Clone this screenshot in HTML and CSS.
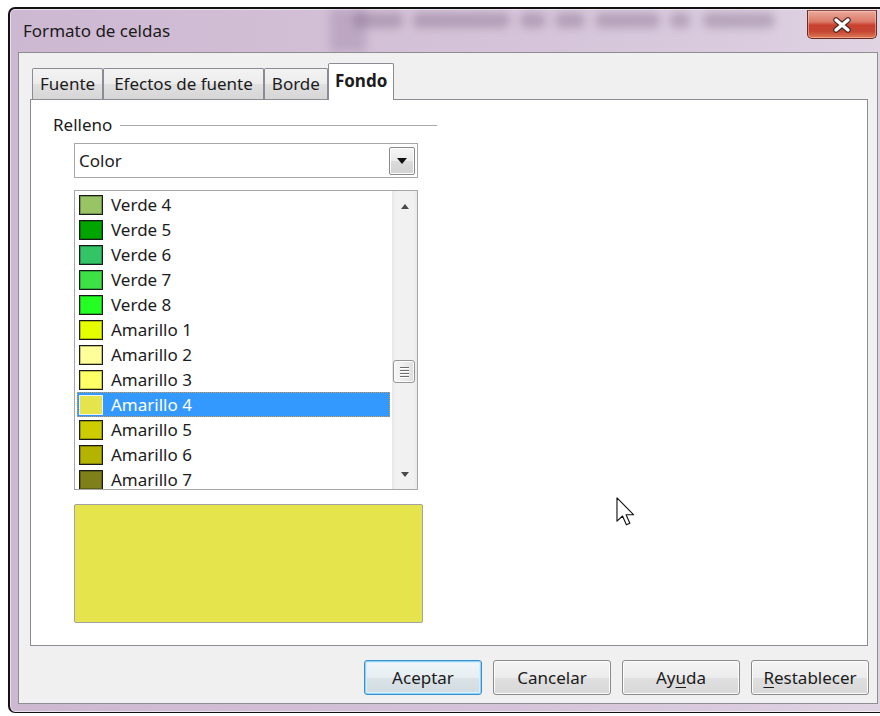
FILE: index.html
```html
<!DOCTYPE html>
<html lang="es">
<head>
<meta charset="utf-8">
<title>Formato de celdas</title>
<link rel="stylesheet" href="styles.css">
</head>
<body>
<div class="window">
  <div class="titlebar">
    <div class="glass" aria-hidden="true">
      <span class="glass-band"></span>
      <span class="glass-blob" style="left:335px;width:50px"></span>
      <span class="glass-blob" style="left:395px;width:97px"></span>
      <span class="glass-blob" style="left:502px;width:26px"></span>
      <span class="glass-blob" style="left:537px;width:30px"></span>
      <span class="glass-blob" style="left:577px;width:65px"></span>
      <span class="glass-blob" style="left:652px;width:20px"></span>
      <span class="glass-blob" style="left:685px;width:72px"></span>
    </div>
    <span class="title">Formato de celdas</span>
    <button class="close" type="button" aria-label="Cerrar">
      <svg width="20" height="16" viewBox="0 0 20 16">
        <path d="M4 3 L16 13 M16 3 L4 13" stroke="#4a2a28" stroke-width="5.6" stroke-linecap="round" fill="none"/>
        <path d="M4 3 L16 13 M16 3 L4 13" stroke="#ffffff" stroke-width="3.4" stroke-linecap="round" fill="none"/>
      </svg>
    </button>
  </div>

  <div class="client">
    <div class="tabs">
      <div class="tab">Fuente</div>
      <div class="tab wide">Efectos de fuente</div>
      <div class="tab">Borde</div>
      <div class="tab active">Fondo</div>
    </div>

    <div class="panel">
      <div class="group">
        <div class="group-head"><span>Relleno</span><span class="rule"></span></div>
        <div class="group-body">
          <div class="combo">
            <span>Color</span>
            <span class="combo-btn">
              <svg width="10" height="6" viewBox="0 0 10 6"><path d="M0 0 H10 L5 6 Z" fill="#111"/></svg>
            </span>
          </div>

          <div class="listbox">
            <div class="rows">
              <div class="row"><span class="swatch" style="background:#99c466"></span>Verde 4</div>
              <div class="row"><span class="swatch" style="background:#00a500"></span>Verde 5</div>
              <div class="row"><span class="swatch" style="background:#33c466"></span>Verde 6</div>
              <div class="row"><span class="swatch" style="background:#3de045"></span>Verde 7</div>
              <div class="row"><span class="swatch" style="background:#23ff23"></span>Verde 8</div>
              <div class="row"><span class="swatch" style="background:#e6ff00"></span>Amarillo 1</div>
              <div class="row"><span class="swatch" style="background:#ffff99"></span>Amarillo 2</div>
              <div class="row"><span class="swatch" style="background:#ffff66"></span>Amarillo 3</div>
              <div class="row selected"><span class="swatch" style="background:#e6e44c"></span>Amarillo 4</div>
              <div class="row"><span class="swatch" style="background:#cccc00"></span>Amarillo 5</div>
              <div class="row"><span class="swatch" style="background:#b3b300"></span>Amarillo 6</div>
              <div class="row"><span class="swatch" style="background:#808019"></span>Amarillo 7</div>
            </div>
            <div class="scrollbar">
              <span class="sb-arrow"><svg width="8" height="5" viewBox="0 0 8 5"><path d="M0 5 L4 0 L8 5 Z" fill="#4a4a4a"/></svg></span>
              <span class="sb-track">
                <span class="sb-thumb" style="margin-top:139px">
                  <i></i><i></i><i></i><i></i>
                </span>
              </span>
              <span class="sb-arrow"><svg width="8" height="5" viewBox="0 0 8 5"><path d="M0 0 L8 0 L4 5 Z" fill="#4a4a4a"/></svg></span>
            </div>
          </div>

          <div class="preview" style="background:#e6e44c"></div>
        </div>
      </div>

      <svg class="cursor" width="19" height="29" viewBox="0 0 12.6 19.4">
        <path d="M0.6 0.6 V16.2 L4.3 12.7 L6.9 18.6 L9.2 17.6 L6.7 11.9 L11.8 11.9 Z" fill="#fff" stroke="#111" stroke-width="0.75" stroke-linejoin="round"/>
      </svg>
    </div>

    <div class="buttons">
      <button class="btn default" type="button">Aceptar</button>
      <button class="btn" type="button">Cancelar</button>
      <button class="btn" type="button">Ay<u>u</u>da</button>
      <button class="btn" type="button"><u>R</u>establecer</button>
    </div>
  </div>
</div>
</body>
</html>
```

FILE: styles.css
```css
* {
  box-sizing: border-box;
}

html,
body {
  margin: 0;
  height: 100%;
}

body {
  background: #ffffff;
  overflow: hidden;
  font-family: "Noto Sans", "Open Sans", sans-serif;
  font-size: 17px;
  color: #1c1c1c;
}

/* ---------- window frame ---------- */

.window {
  margin: 7px 0 0 8px;
  width: 880px;
  height: 706px;
  padding: 0 8px 8px 8px;
  border: 2px solid #121212;
  border-bottom-width: 1px;
  border-radius: 7px 7px 0 7px;
  background: linear-gradient(90deg, #cdb8d1 0%, #d3c1d7 45%, #d9cadd 80%, #e0d4e3 100%);
  box-shadow: inset 0 0 0 1px rgba(255, 255, 255, 0.55);
}

.titlebar {
  position: relative;
  height: 43px;
  display: flex;
  align-items: flex-start;
}

.glass {
  position: absolute;
  inset: 0;
  overflow: hidden;
  pointer-events: none;
}

.glass-band {
  position: absolute;
  left: 312px;
  top: 0;
  width: 36px;
  height: 43px;
  background: rgba(140, 108, 148, 0.3);
  filter: blur(5px);
}

.glass-blob {
  position: absolute;
  top: 4px;
  height: 15px;
  border-radius: 7px;
  background: rgba(110, 84, 118, 0.32);
  filter: blur(4px);
}

.title {
  position: relative;
  padding: 12px 0 0 5px;
  line-height: 20px;
  color: #1b1b1b;
}

.close {
  position: relative;
  margin: 1px 1px 0 auto;
  width: 70px;
  height: 29px;
  padding: 0;
  border: 1px solid #6b2a22;
  border-top-color: #8a4a42;
  border-radius: 0 0 5px 5px;
  background: linear-gradient(#eaa899 0%, #dc7a68 40%, #c8412f 52%, #c54532 75%, #de7a55 100%);
  box-shadow: inset 0 0 0 1px rgba(255, 220, 210, 0.45);
  display: flex;
  align-items: center;
  justify-content: center;
}

/* ---------- client area ---------- */

.client {
  height: 652px;
  border: 1px solid #8f8c94;
  background: #f0f0f0;
  padding: 10px 8px 0 11px;
}

.tabs {
  position: relative;
  z-index: 1;
  display: flex;
  align-items: flex-end;
  height: 37px;
  margin: 0 0 -1px 2px;
}

.tab {
  height: 31px;
  margin-bottom: 1px;
  padding: 0 7px;
  border: 1px solid #898c95;
  border-bottom: none;
  border-radius: 2px 2px 0 0;
  background: linear-gradient(#f3f3f3 0%, #ececec 50%, #e0e0e0 51%, #d6d6d6 100%);
  line-height: 29px;
  white-space: nowrap;
}

.tab.wide {
  padding: 0 10px;
}

.tab.active {
  height: 37px;
  margin-bottom: 0;
  background: #ffffff;
  font-weight: bold;
  line-height: 34px;
  padding: 0 6px;
}

.panel {
  position: relative;
  width: 838px;
  height: 547px;
  border: 1px solid #898c95;
  background: #ffffff;
}

/* ---------- fill group ---------- */

.group {
  width: 384px;
  margin-left: 22px;
  padding-top: 14px;
}

.group-head {
  display: flex;
  align-items: center;
  height: 22px;
  line-height: 22px;
}

.rule {
  flex: 1;
  height: 1px;
  margin-left: 8px;
  background: #a8a8a8;
}

.group-body {
  margin-left: 21px;
  padding-top: 7px;
}

.combo {
  display: flex;
  align-items: center;
  width: 344px;
  height: 35px;
  padding-left: 4px;
  border: 1px solid #a7a7a7;
  background: #ffffff;
}

.combo-btn {
  display: flex;
  align-items: center;
  justify-content: center;
  width: 26px;
  height: 28px;
  margin: 0 2px 0 auto;
  border: 1px solid #8b8b8b;
  border-radius: 2px;
  background: linear-gradient(#f6f6f6 0%, #ebebeb 50%, #dcdcdc 51%, #d2d2d2 100%);
  box-shadow: inset 0 0 0 1px #fbfbfb;
}

.listbox {
  display: flex;
  width: 344px;
  height: 300px;
  margin-top: 12px;
  border: 1px solid #a7a7a7;
  background: #ffffff;
}

.rows {
  flex: 1;
  padding: 1px 1px 0;
  overflow: hidden;
}

.row {
  display: flex;
  align-items: center;
  gap: 8px;
  height: 25px;
  margin: 0 1px;
  padding-left: 2px;
  white-space: nowrap;
  color: #1c1c1c;
}

.swatch {
  flex: none;
  width: 24px;
  height: 20px;
  border: 1px solid #1a1a1a;
  box-shadow: inset 0 0 0 1px rgba(0, 0, 0, 0.25);
}

.row.selected {
  background: #3399ff;
  color: #ffffff;
  outline: 1px dotted #d89a4a;
  outline-offset: -1px;
}

.row.selected .swatch {
  border-color: #f2f2f2;
  box-shadow: none;
}

.scrollbar {
  display: flex;
  flex-direction: column;
  width: 25px;
  background: linear-gradient(90deg, #e6e6e6 0%, #f1f1f1 15%, #f1f1f1 85%, #e9e9e9 100%);
}

.sb-arrow {
  display: flex;
  align-items: center;
  justify-content: center;
  height: 30px;
}

.sb-track {
  flex: 1;
}

.sb-thumb {
  display: flex;
  flex-direction: column;
  align-items: center;
  justify-content: center;
  gap: 2px;
  width: 22px;
  height: 23px;
  margin-left: 1px;
  border: 1px solid #969696;
  border-radius: 3px;
  background: linear-gradient(90deg, #f7f7f7 0%, #ececec 50%, #dedede 100%);
  box-shadow: inset 0 0 0 1px #fbfbfb;
}

.sb-thumb i {
  display: block;
  width: 9px;
  height: 1px;
  background: #6e6e6e;
  box-shadow: 0 1px 0 #ffffff;
}

.preview {
  width: 349px;
  height: 119px;
  margin-top: 14px;
  border: 1px solid #a3a3a3;
  border-radius: 2px;
}

.cursor {
  position: absolute;
  left: 585px;
  top: 397px;
}

/* ---------- dialog buttons ---------- */

.buttons {
  display: flex;
  justify-content: flex-end;
  gap: 11px;
  margin-top: 14px;
}

.btn {
  width: 118px;
  height: 35px;
  padding: 0;
  border: 1px solid #8c8c8c;
  border-radius: 3px;
  background: linear-gradient(#f4f4f4 0%, #ececec 50%, #e0e0e0 51%, #d8d8d8 100%);
  box-shadow: inset 0 0 0 1px #fcfcfc;
  font-family: inherit;
  font-size: 17px;
  color: #1c1c1c;
}

.btn u {
  text-decoration-thickness: 1px;
  text-underline-offset: 3px;
}

.btn.default {
  border-color: #3c8fcf;
  box-shadow: inset 0 0 0 1px #8fd4f6, inset 0 0 0 2px #d8f0fb;
  background: linear-gradient(#f0f6f9 0%, #e7eef2 50%, #d9e3e8 51%, #d1dbe0 100%);
}
```
